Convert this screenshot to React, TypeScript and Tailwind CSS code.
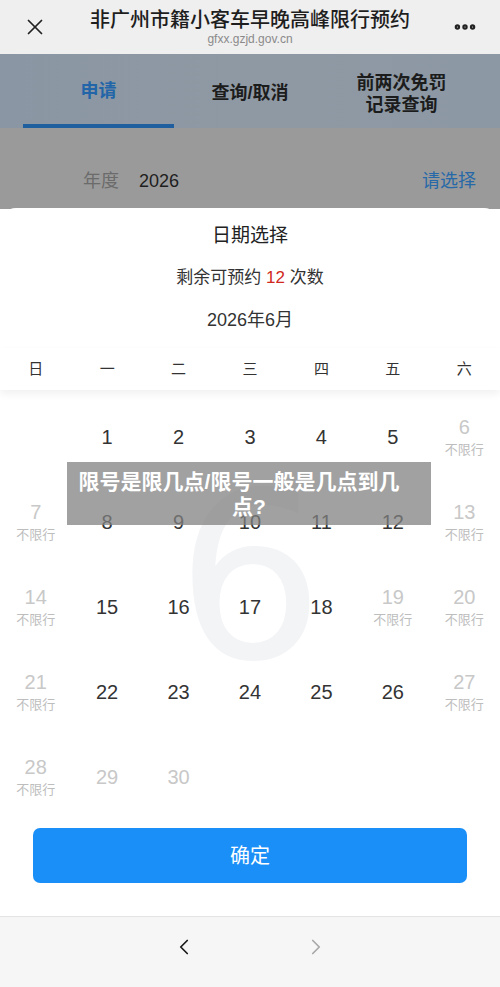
import { X, MoreHorizontal, ChevronLeft, ChevronRight } from 'lucide-react';

type Cell = { day: number; state: 'open' | 'free' | 'off' } | null;

const weekdays = ['日', '一', '二', '三', '四', '五', '六'];

// 2026年6月: 1st is a Monday
const rows: Cell[][] = [
  [null, { day: 1, state: 'open' }, { day: 2, state: 'open' }, { day: 3, state: 'open' }, { day: 4, state: 'open' }, { day: 5, state: 'open' }, { day: 6, state: 'free' }],
  [{ day: 7, state: 'free' }, { day: 8, state: 'open' }, { day: 9, state: 'open' }, { day: 10, state: 'open' }, { day: 11, state: 'open' }, { day: 12, state: 'open' }, { day: 13, state: 'free' }],
  [{ day: 14, state: 'free' }, { day: 15, state: 'open' }, { day: 16, state: 'open' }, { day: 17, state: 'open' }, { day: 18, state: 'open' }, { day: 19, state: 'free' }, { day: 20, state: 'free' }],
  [{ day: 21, state: 'free' }, { day: 22, state: 'open' }, { day: 23, state: 'open' }, { day: 24, state: 'open' }, { day: 25, state: 'open' }, { day: 26, state: 'open' }, { day: 27, state: 'free' }],
  [{ day: 28, state: 'free' }, { day: 29, state: 'off' }, { day: 30, state: 'off' }, null, null, null, null],
];

function DayCell({ cell }: { cell: Cell }) {
  if (!cell) return <div />;
  if (cell.state === 'open') {
    return (
      <div className="flex items-center justify-center text-[20px] text-[#333]">{cell.day}</div>
    );
  }
  if (cell.state === 'off') {
    return (
      <div className="flex items-center justify-center text-[20px] text-[#c8c8c8]">{cell.day}</div>
    );
  }
  return (
    <div className="flex flex-col items-center justify-center">
      <span className="text-[20px] leading-[22px] text-[#c8c8c8]">{cell.day}</span>
      <span className="mt-[4px] text-[13px] leading-[16px] text-[#bdbdbd]">不限行</span>
    </div>
  );
}

export default function App() {
  return (
    <div
      className="relative flex h-[987px] w-[500px] flex-col overflow-hidden bg-white"
      style={{ fontFamily: '"Liberation Sans", "Noto Sans CJK SC", sans-serif' }}
    >
      {/* Browser title bar */}
      <div className="flex h-[54px] items-center bg-[#efefef] px-[22px]">
        <X className="h-[26px] w-[26px] text-[#222]" strokeWidth={1.6} />
        <div className="flex flex-1 flex-col items-center pt-[3px]">
          <div className="text-[20px] font-medium leading-[22px] text-[#1e1e1e]">非广州市籍小客车早晚高峰限行预约</div>
          <div className="text-[12px] leading-[17px] text-[#8a8a8a]">gfxx.gzjd.gov.cn</div>
        </div>
        <MoreHorizontal className="h-[26px] w-[26px] text-[#222]" strokeWidth={3} />
      </div>

      {/* Dimmed page behind the sheet */}
      <div className="flex h-[155px] flex-col">
        <div className="flex h-[74px] items-stretch bg-[linear-gradient(90deg,#8a96a3,#8f99a4_50%,#8c98a4)] px-[23px]">
          <div className="flex w-[151px] flex-col items-center justify-center">
            <div className="flex flex-1 items-center pt-[5px] text-[18px] font-bold text-[#2265a8]">申请</div>
            <div className="h-[4px] w-full bg-[#1f5fa0]" />
          </div>
          <div className="flex flex-1 items-center justify-center pt-[5px] text-[18px] font-bold text-[#1c1c1c]">查询/取消</div>
          <div className="flex w-[151px] flex-col items-center justify-center pt-[5px] text-[18px] font-bold leading-[22px] text-[#1c1c1c]">
            <span>前两次免罚</span>
            <span>记录查询</span>
          </div>
        </div>
        <div className="flex flex-1 items-start bg-[#9a9a9a] pl-[83px] pr-[24px] pt-[40px]">
          <span className="text-[18px] text-[#6b6b6b]">年度</span>
          <span className="ml-[20px] text-[18px] text-[#1e1e1e]">2026</span>
          <span className="ml-auto text-[18px] text-[#2769a8]">请选择</span>
        </div>
      </div>

      {/* Date picker sheet */}
      <div className="relative -mt-[1px] flex flex-1 flex-col rounded-t-[16px] bg-white">
        <div className="pointer-events-none absolute left-0 right-0 top-[254px] flex justify-center">
          <span className="text-[232px] leading-none text-[#f3f4f6]" style={{ fontFamily: '"DejaVu Sans", sans-serif' }}>6</span>
        </div>

        <div className="relative flex flex-col items-center pt-[15px]">
          <div className="text-[19px] leading-[26px] text-[#222]">日期选择</div>
          <div className="mt-[16px] text-[17px] leading-[26px] text-[#333]">
            剩余可预约 <span className="text-[#d0281c]">12</span> 次数
          </div>
          <div className="mt-[16px] text-[18px] leading-[26px] text-[#333]">2026年6月</div>
        </div>

        <div className="relative mt-[15px] grid h-[42px] grid-cols-7 items-center shadow-[0_4px_8px_rgba(0,0,0,0.06)]">
          {weekdays.map((w) => (
            <div key={w} className="text-center text-[15px] text-[#333]">{w}</div>
          ))}
        </div>

        <div className="relative mt-[4px] grid grid-cols-7 grid-rows-[repeat(5,85px)]">
          {rows.flat().map((cell, i) => (
            <DayCell key={i} cell={cell} />
          ))}
        </div>

        <div className="relative mt-[9px] px-[33px]">
          <button className="flex h-[55px] w-full items-center justify-center rounded-[7px] bg-[#1a8ff8] text-[20px] text-white">
            确定
          </button>
        </div>
      </div>

      {/* Browser bottom nav */}
      <div className="flex h-[71px] items-center justify-center gap-[106px] border-t border-[#e4e4e4] bg-[#f6f6f6] pb-[10px]">
        <ChevronLeft className="h-[26px] w-[26px] text-[#1a1a1a]" strokeWidth={1.6} />
        <ChevronRight className="h-[26px] w-[26px] text-[#a8a8a8]" strokeWidth={1.6} />
      </div>

      {/* Article caption overlay */}
      <div className="absolute left-[67px] top-[462px] flex h-[63px] w-[364px] flex-col items-center justify-center bg-[rgba(130,130,130,0.75)] text-[21px] font-bold leading-[25px] text-white">
        <span className="mr-[20px]">限号是限几点/限号一般是几点到几</span>
        <span>点?</span>
      </div>
    </div>
  );
}
